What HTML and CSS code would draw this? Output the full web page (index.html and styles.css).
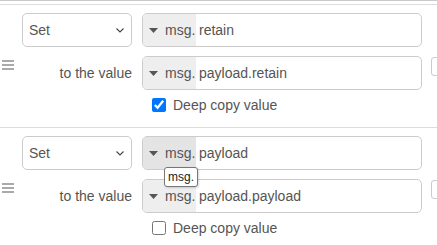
FILE: index.html
```html
<!DOCTYPE html>
<html>
<head>
<meta charset="utf-8">
<link rel="stylesheet" href="styles.css">
</head>
<body>
<div class="list">
  <div class="item">
    <div class="handle"><span></span><span></span><span></span></div>
    <div class="rule">
      <div class="row">
        <div class="select"><span>Set</span><svg class="chev" width="8" height="5" viewBox="0 0 8 5"><polyline points="0.5,0.5 4,4 7.5,0.5" fill="none" stroke="#444" stroke-width="1.1"/></svg></div>
        <div class="typed"><div class="prefix"><svg class="caret" width="9" height="5" viewBox="0 0 9 5"><polygon points="0,0 9,0 4.5,5" fill="#555"/></svg><span>msg.</span></div><div class="value">retain</div></div>
      </div>
      <div class="row">
        <div class="label">to the value</div>
        <div class="typed"><div class="prefix"><svg class="caret" width="9" height="5" viewBox="0 0 9 5"><polygon points="0,0 9,0 4.5,5" fill="#555"/></svg><span>msg.</span></div><div class="value">payload.retain</div></div>
        <div class="btn"></div>
      </div>
      <div class="row check">
        <input type="checkbox" checked><span>Deep copy value</span>
      </div>
    </div>
  </div>
  <div class="item">
    <div class="handle"><span></span><span></span><span></span></div>
    <div class="rule">
      <div class="row">
        <div class="select"><span>Set</span><svg class="chev" width="8" height="5" viewBox="0 0 8 5"><polyline points="0.5,0.5 4,4 7.5,0.5" fill="none" stroke="#444" stroke-width="1.1"/></svg></div>
        <div class="typed"><div class="prefix hover"><svg class="caret" width="9" height="5" viewBox="0 0 9 5"><polygon points="0,0 9,0 4.5,5" fill="#555"/></svg><span>msg.</span></div><div class="value">payload</div></div>
      </div>
      <div class="row">
        <div class="label">to the value</div>
        <div class="typed"><div class="prefix"><svg class="caret" width="9" height="5" viewBox="0 0 9 5"><polygon points="0,0 9,0 4.5,5" fill="#555"/></svg><span>msg.</span></div><div class="value">payload.payload</div></div>
        <div class="btn"></div>
      </div>
      <div class="row check">
        <input type="checkbox"><span>Deep copy value</span>
      </div>
    </div>
  </div>
</div>
<div class="tooltip">msg.</div>
</body>
</html>
```
FILE: styles.css
```css
html, body {
  margin: 0;
  padding: 0;
  background: #fff;
  overflow: hidden;
  width: 437px;
  height: 245px;
}
body {
  font-family: "Liberation Sans", Arial, sans-serif;
  font-size: 14px;
  color: #555;
  position: relative;
}
.list {
  border-top: 1px solid #c8c8c8;
  padding-top: 3px;
}
.item {
  display: flex;
  align-items: center;
  border-top: 1px solid #ddd;
  padding: 8px 0 12px 0;
}
.handle {
  flex: none;
  width: 12px;
  margin: 1px 8px 0 2px;
  display: flex;
  flex-direction: column;
  gap: 2px;
}
.handle span {
  display: block;
  height: 2px;
  background: #aaa;
}
.rule {
  flex: none;
  display: flex;
  flex-direction: column;
}
.row {
  display: flex;
  align-items: center;
  height: 34px;
}
.row + .row {
  margin-top: 9px;
}
.row.check {
  height: 20px;
  margin-top: 5px;
  padding-left: 130px;
}
.select {
  flex: none;
  box-sizing: border-box;
  width: 110px;
  height: 34px;
  border: 1px solid #ccc;
  border-radius: 5px;
  display: flex;
  align-items: center;
  justify-content: space-between;
  padding: 0 7px 0 6px;
  color: #555;
}
.chev {
  display: block;
}
.label {
  flex: none;
  width: 110px;
  text-align: right;
  color: #555;
}
.typed {
  flex: none;
  box-sizing: border-box;
  margin-left: 10px;
  width: 280px;
  height: 34px;
  border: 1px solid #ccc;
  border-radius: 5px;
  display: flex;
  align-items: stretch;
  overflow: hidden;
}
.prefix {
  background: #eee;
  width: 53px;
  display: flex;
  align-items: center;
  padding-left: 6px;
  box-sizing: border-box;
  color: #555;
}
.prefix.hover {
  background: #e4e4e4;
}
.caret {
  display: block;
  margin-right: 7px;
}
.value {
  display: flex;
  align-items: center;
  padding-left: 3px;
  color: #555;
}
.btn {
  flex: none;
  box-sizing: border-box;
  margin-left: 9px;
  width: 22px;
  height: 19px;
  border: 1px solid #ccc;
  border-radius: 3px;
  align-self: flex-start;
  margin-top: 1px;
}
.check input {
  width: 14px;
  height: 14px;
  margin: 0 7px 0 0;
}
.tooltip {
  position: absolute;
  left: 164px;
  top: 167px;
  box-sizing: border-box;
  height: 20px;
  padding: 0 3px;
  border: 1px solid #767676;
  border-radius: 3px;
  background: #fff;
  color: #222;
  font-family: "Liberation Sans", Arial, sans-serif;
  font-size: 12px;
  line-height: 18px;
  box-shadow: 1px 1px 2px rgba(0,0,0,0.15);
}
```
